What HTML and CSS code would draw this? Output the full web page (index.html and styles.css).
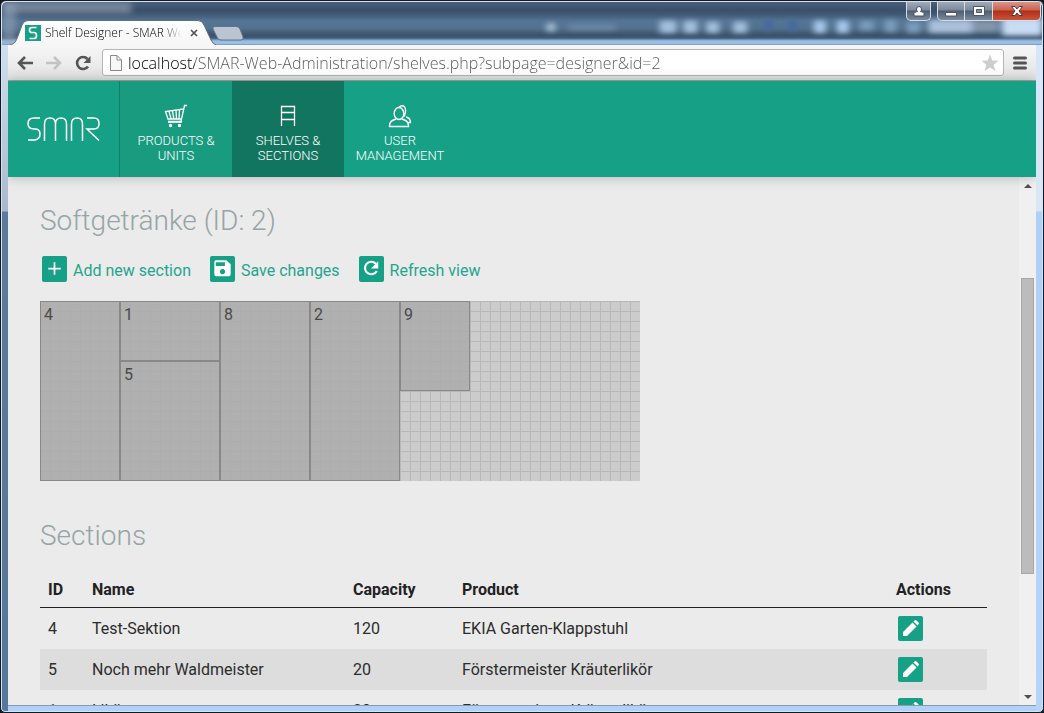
FILE: index.html
```html
<!DOCTYPE html>
<html lang="en">
<head>
<meta charset="utf-8">
<title>Shelf Designer - SMAR Web Administration</title>
<link rel="stylesheet" href="styles.css">
</head>
<body>
<div class="window">
  <div class="titlebar">
    <svg class="glass" preserveAspectRatio="none" viewBox="0 0 1044 46" aria-hidden="true">
      <defs><filter id="soft" x="-10%" y="-50%" width="120%" height="200%"><feGaussianBlur stdDeviation="3"/></filter></defs>
      <g filter="url(#soft)">
        <path fill="#9aa9b9" opacity=".55" d="M0 0h130v12H0z"/>
        <path fill="#8fa2b6" opacity=".6" d="M0 0h14v46H0z"/>
        <circle cx="551" cy="27" r="5" fill="#a9bdd2"/>
        <path fill="#7893ae" opacity=".7" d="M568 24h48v6h-48z"/>
        <path fill="#a3bfdd" d="M660 20h17v13h-17zM684 20h14v13h-14zM707 21h13v12h-13zM734 21h14v12h-14z"/>
        <path fill="#45699c" d="M765 19h9v12h-9zM789 19h9v12h-9z"/>
        <path fill="#a9c9ec" d="M815 20h12v13h-12zM838 20h12v13h-12z"/>
        <path fill="#7c9dbd" d="M861 20h14v10h-14zM886 19h12v13h-12zM908 21h14v12h-14z"/>
        <path fill="#abc0da" d="M930 19h44v14h-44z"/>
        <path fill="#8496aa" d="M974 20h26v12h-26z"/>
        <path fill="#c8dcf4" d="M1004 17h40v19h-40z"/>
      </g>
    </svg>
    <div class="tab">
      <svg class="tab-shape" viewBox="0 0 206 25" aria-hidden="true"><defs><linearGradient id="tabfill" x2="0" y2="1"><stop stop-color="#fff"/><stop offset="1" stop-color="#f6f6f6"/></linearGradient></defs><path d="M0 25C5 24 6 21 8 16L12 5Q14 .5 18 .5H188Q192 .5 194 5L201 20Q203 24 206 25" fill="url(#tabfill)" stroke="#5d6f83"/></svg>
      <svg class="favicon" viewBox="0 0 16 16" aria-hidden="true"><path fill="#16a085" d="M0 0h16v16H0z"/><path d="M11.500 2.500H7Q4.500 2.500 4.500 5T7 7.500H9Q11.500 7.500 11.500 10.500T9 13.500H4.500" fill="none" stroke="#fff" stroke-width="1.700"/></svg>
      <span class="tab-title">Shelf Designer - SMAR We</span>
      <button class="tab-close" aria-label="Close tab"><svg viewBox="0 0 8 8"><path d="M1 1l6 6M7 1L1 7" stroke="#555" stroke-width="1.700"/></svg></button>
    </div>
    <button class="new-tab" aria-label="New tab"><svg viewBox="0 0 32 15"><path d="M3 .5H24Q27 .5 28 3L31 11Q32 14 29 14H9Q6 14 5 11L1 3Q0 .5 3 .5Z" fill="#bac5d1" stroke="#60758d"/></svg></button>
    <div class="controls">
      <button class="ctl user" aria-label="User"><svg viewBox="0 0 12 12"><path d="M1 11V8.500Q1 7 4.500 6.500Q3.500 5.500 3.500 4Q3.500 1.500 6 1.500T8.500 4Q8.500 5.500 7.500 6.500Q11 7 11 8.500V11Z" fill="#fff" stroke="#424e60"/></svg></button>
      <div class="ctl-group">
        <button class="ctl min" aria-label="Minimize"><svg viewBox="0 0 12 12"><path d="M.5 7.500h11v3.500H.5z" fill="#fff" stroke="#4c576a"/></svg></button>
        <button class="ctl max" aria-label="Maximize"><svg viewBox="0 0 12 12"><path d="M.5 1.500h11v9H.5z" fill="#fff" stroke="#4c576a"/><path d="M3.500 4.500h5v3h-5z" fill="#8592a3" stroke="#4c576a"/></svg></button>
        <button class="ctl close" aria-label="Close"><svg viewBox="0 0 12 12"><path d="M.5 1.500H4L6 4l2-2.500h3.500L8 6l3.500 4.500H8L6 8l-2 2.500H.5L4 6Z" fill="#fff" stroke="#5b3a42"/></svg></button>
      </div>
    </div>
  </div>

  <div class="client">
    <div class="toolbar">
      <button class="tool" aria-label="Back"><svg viewBox="0 0 16 16"><path d="M16 8H2M8 2L2 8l6 6" fill="none" stroke="#555" stroke-width="2.600"/></svg></button>
      <button class="tool" aria-label="Forward"><svg viewBox="0 0 16 16"><path d="M0 8h14M8 2l6 6-6 6" fill="none" stroke="#c3c3c3" stroke-width="2.600"/></svg></button>
      <button class="tool" aria-label="Reload"><svg viewBox="0 0 16 16"><path d="M13 11.500A6 6 0 1 1 12.500 4" fill="none" stroke="#555" stroke-width="2.600"/><path d="M15.500 1v7H8.500Z" fill="#555"/></svg></button>
      <div class="address">
        <svg class="page" viewBox="0 0 12 16" aria-hidden="true"><path d="M.5 .5H7L11.500 5V15.500H.5ZM7 .5V5h4.500" fill="#f8f8f8" stroke="#888"/></svg>
        <input class="url" type="text" aria-label="Address" value="localhost/SMAR-Web-Administration/shelves.php?subpage=designer&amp;id=2">
        <button class="star" aria-label="Bookmark"><svg viewBox="0 0 18 18"><path d="M9 .5l2.300 6 6.200.3-4.800 4 1.600 6.200L9 13.500 3.700 17l1.600-6.200-4.800-4 6.200-.3Z" fill="#cecece"/></svg></button>
      </div>
      <button class="menu" aria-label="Menu"><svg viewBox="0 0 14 14"><path d="M1.500 2h11M1.500 7h11M1.500 12h11" stroke="#555" stroke-width="3" stroke-linecap="round"/></svg></button>
    </div>

    <header class="header">
      <a class="logo" href="#" aria-label="SMAR"><svg viewBox="0 0 73 24"><path d="M13 1H7Q1 1 1 6.500T7 12H8Q13 12 13 17T8 23H1M17.500 24V7Q17.500 1 23 1T28.500 7V24M28.500 7Q28.500 1 34 1T39.500 7V24M44.500 24V7Q44.500 1 50 1T55.500 7V24M60 1H67Q72 1 72 6.500T67 12H60L72 23.500" fill="none" stroke="#fff" stroke-width="1.500"/></svg></a>
      <nav class="nav">
        <a class="nav-item products" href="#"><svg viewBox="0 0 24 24" fill="none" stroke="#fff" stroke-width="1.300"><path d="M23 1.500H20.500L17 17.500H4M19.500 5L1.500 7.500 4 15H17.500M5 7.500l2 7M8.500 7l1.300 8M12 6.500l.5 8.500M15.500 6L15 15"/><path d="M4 18H18"/><circle cx="6.500" cy="21.500" r="1" fill="#fff"/><circle cx="15.500" cy="21.500" r="1" fill="#fff"/></svg><span>Products &amp; Units</span></a>
        <a class="nav-item active" href="#"><svg viewBox="0 0 24 24" fill="none" stroke="#fff" stroke-width="1.300"><path d="M5.500 22V2.500H18.500V22M5.500 8.500H18.500M5.500 15.500H18.500"/></svg><span>Shelves &amp; Sections</span></a>
        <a class="nav-item" href="#"><svg viewBox="0 0 24 24" fill="none" stroke="#fff" stroke-width="1.400"><ellipse cx="11" cy="9.500" rx="4.800" ry="6"/><path d="M8 15L4.500 16.500Q1.500 18 1.500 22.500H20.500Q20.500 18 17.500 16.500L14 15M11 3Q13 1 15.500 2Q18 3.500 17.500 8Q17 11 16 12.500M18 13Q22.500 14 22.500 18.500H20.500"/></svg><span>User Management</span></a>
      </nav>
    </header>

    <div class="viewport">
      <main class="content">
        <h1 class="heading">Softgetränke (ID: 2)</h1>
        <div class="actions">
          <button class="action"><span class="badge"><svg viewBox="0 0 26 26"><path d="M13 6v13M6.500 12.500h13" stroke="#fff" stroke-width="1.800"/></svg></span><span class="label">Add new section</span></button>
          <button class="action"><span class="badge"><svg viewBox="0 0 26 26"><path fill="#fff" fill-rule="evenodd" d="M6 4H17L21.500 8V18.500Q21.500 20.500 19.500 20.500H6.500Q4.500 20.500 4.500 18.500V6Q4.500 4 6 4ZM6 6V10H15.500V6ZM13 13a2.700 2.700 0 1 0 .01 0Z"/></svg></span><span class="label">Save changes</span></button>
          <button class="action"><span class="badge"><svg viewBox="0 0 26 26"><path d="M18.500 15A6.500 6.500 0 1 1 17.500 7.500" fill="none" stroke="#fff" stroke-width="2.200"/><path d="M20 5v7.500h-7.500Z" fill="#fff"/></svg></span><span class="label">Refresh view</span></button>
        </div>

        <div class="shelf">
          <div class="section full">4</div>
          <div class="section upper">1</div>
          <div class="section full">8</div>
          <div class="section full">2</div>
          <div class="section half">9</div>
          <div class="section lower">5</div>
        </div>

        <h2 class="heading">Sections</h2>
        <table class="table">
          <thead><tr><th class="c-id">ID</th><th class="c-name">Name</th><th class="c-cap">Capacity</th><th class="c-prod">Product</th><th class="c-act">Actions</th></tr></thead>
          <tbody>
            <tr><td>4</td><td>Test-Sektion</td><td>120</td><td>EKIA Garten-Klappstuhl</td><td><button class="edit" aria-label="Edit"><svg viewBox="0 0 25 25"><path fill="#fff" d="M5 20v-4L14.500 6.500l4 4L9 20ZM15.500 5.500l1-1q1-1 2 0l2 2q1 1 0 2l-1 1Z"/></svg></button></td></tr>
            <tr><td>5</td><td>Noch mehr Waldmeister</td><td>20</td><td>Förstermeister Kräuterlikör</td><td><button class="edit" aria-label="Edit"><svg viewBox="0 0 25 25"><path fill="#fff" d="M5 20v-4L14.500 6.500l4 4L9 20ZM15.500 5.500l1-1q1-1 2 0l2 2q1 1 0 2l-1 1Z"/></svg></button></td></tr>
            <tr><td>1</td><td>Likör</td><td>20</td><td>Förstermeister Kräuterlikör</td><td><button class="edit" aria-label="Edit"><svg viewBox="0 0 25 25"><path fill="#fff" d="M5 20v-4L14.500 6.500l4 4L9 20ZM15.500 5.500l1-1q1-1 2 0l2 2q1 1 0 2l-1 1Z"/></svg></button></td></tr>
          </tbody>
        </table>
      </main>
      <div class="scrollbar">
        <button class="scroll-btn" aria-label="Scroll up"><svg viewBox="0 0 8 4"><path d="M0 4L4 0l4 4Z" fill="#505050"/></svg></button>
        <div class="track"><div class="thumb"></div></div>
        <button class="scroll-btn" aria-label="Scroll down"><svg viewBox="0 0 8 4"><path d="M0 0h8L4 4Z" fill="#505050"/></svg></button>
      </div>
    </div>
  </div>
</div>
</body>
</html>
```

FILE: styles.css
```css
* { box-sizing: border-box; }

body {
  margin: 0;
  background: #10141c;
  font-family: Roboto, "Liberation Sans", sans-serif;
}

button {
  padding: 0;
  border: 0;
  background: none;
  font: inherit;
  color: inherit;
}

svg { display: block; }

/* Window frame */
.window {
  position: relative;
  display: flex;
  flex-direction: column;
  height: 100vh;
  padding: 0 7px 6px;
  overflow: hidden;
  border: 1px solid #141821;
  border-radius: 6px 6px 5px 5px;
  box-shadow: inset 0 0 0 1px #d3e4f7;
  background:
    linear-gradient(#dbe7f5, #a9b9cc 210px, #5c7a9c 211px, #56769b) left / 7px 100% no-repeat,
    linear-gradient(#d5e6fa, #d9e6f6 210px, #aed0f5 211px, #b4d5fa) right / 7px 100% no-repeat,
    #b1d2f8;
}

.titlebar {
  position: relative;
  display: flex;
  flex: none;
  height: 43px;
  margin: 1px -6px 0;
  padding: 0 1px 0 8px;
  border-radius: 5px 5px 0 0;
  overflow: hidden;
  background: linear-gradient(#48607a, #3b4f69 8px, #405873 12px, #557596 19px, #54728f 26px, #3c526a 33px, #425a75 36px, #9abfe6 39px, #9abfe6 42px, #6c8097 43px);
}

.glass {
  position: absolute;
  inset: 0;
  width: 100%;
  height: 100%;
}

.tab {
  position: relative;
  display: flex;
  align-items: center;
  align-self: flex-end;
  width: 206px;
  height: 25px;
  padding: 0 18px 0 15px;
}

.tab-shape {
  position: absolute;
  inset: 0;
}

.favicon {
  position: relative;
  width: 16px;
  height: 16px;
}

.tab-title {
  position: relative;
  flex: 1;
  margin: 0 8px 0 4px;
  overflow: hidden;
  white-space: nowrap;
  font: 300 12px/16px "Open Sans", "Noto Sans", sans-serif;
  color: #000;
  -webkit-mask-image: linear-gradient(to left, transparent, #000 20px);
  mask-image: linear-gradient(to left, transparent, #000 20px);
}

.tab-close {
  position: relative;
  width: 8px;
}

.new-tab {
  position: relative;
  align-self: flex-end;
  width: 32px;
  height: 15px;
  margin: 0 0 4px -4px;
}

.controls {
  position: relative;
  display: flex;
  gap: 6px;
  height: 20px;
  margin: -1px 0 0 auto;
}

.ctl-group { display: flex; }

.ctl {
  display: flex;
  align-items: center;
  justify-content: center;
  width: 28px;
  height: 20px;
  border: solid #d5dce4;
  border-width: 0 1px 1px 0;
  background: linear-gradient(#a4afbd, #7c899b 9px, #4d5d73 10px, #7b8b9d);
}

.ctl svg { width: 12px; height: 12px; }
.ctl.user { width: 25px; border-left-width: 1px; border-radius: 0 0 5px 5px; }
.ctl.min { border-left-width: 1px; border-radius: 0 0 0 5px; }
.ctl.close {
  width: 48px;
  border-radius: 0 0 5px;
  background: linear-gradient(#dd9a8e, #c96350 9px, #b02f17 10px, #c9553a);
}

.client {
  display: flex;
  flex: 1;
  flex-direction: column;
  min-height: 0;
  overflow: hidden;
  border-bottom: 1px solid #8b9aab;
  background: #ebebeb;
}

/* Browser toolbar */
.toolbar {
  display: flex;
  flex: none;
  align-items: center;
  height: 36px;
  padding: 0 9px;
  border-bottom: 1px solid #a5a5a5;
  background: linear-gradient(#f7f7f7, #e2e2e2);
}

.tool {
  width: 16px;
  margin-right: 13px;
}

.address {
  display: flex;
  flex: 1;
  align-items: center;
  height: 27px;
  margin: 0 9px 0 -2px;
  padding: 0 4px 0 7px;
  border: 1px solid #b5b5b5;
  border-radius: 3px;
  background: #fff;
}

.page { width: 12px; height: 16px; }

.url {
  flex: 1;
  min-width: 0;
  margin: 0 6px;
  padding: 0;
  border: 0;
  outline: 0;
  font: 300 16px/24px "Open Sans", "Noto Sans", sans-serif;
  color: transparent;
  background: linear-gradient(to right, #000 67px, #555 67px);
  -webkit-background-clip: text;
  background-clip: text;
}

.star { width: 18px; }
.menu { width: 14px; }

/* Application header */
.header {
  position: relative;
  z-index: 1;
  display: flex;
  flex: none;
  height: 96px;
  background: #16a085;
  box-shadow: 0 0 12px rgba(0, 0, 0, .25);
}

.logo {
  display: flex;
  align-items: center;
  justify-content: center;
  width: 112px;
  border-right: 1px solid #128068;
}

.logo svg { width: 73px; height: 24px; }
.nav { display: flex; }

.nav-item {
  display: flex;
  flex-direction: column;
  align-items: center;
  gap: 5px;
  width: 112px;
  padding: 23px 8px 0;
  text-align: center;
  text-decoration: none;
  text-transform: uppercase;
  font-size: 13px;
  font-weight: 300;
  line-height: 15px;
  color: #fff;
}

.nav-item svg { width: 24px; height: 24px; }
.nav-item.products { background: #189b7f; }
.nav-item.active { background: #12755f; }

/* Page */
.viewport {
  display: flex;
  flex: 1;
  min-height: 0;
}

.content {
  flex: 1;
  min-width: 0;
  padding: 25px 32px 0;
  overflow: hidden;
}

.heading {
  margin: 0;
  font-size: 28px;
  font-weight: 300;
  line-height: 38px;
  color: #95a5a6;
}

.actions {
  display: flex;
  gap: 19px;
  margin: 16px 2px 17px;
}

.action {
  display: flex;
  align-items: flex-start;
  gap: 6px;
  font-size: 16px;
  line-height: 26px;
  color: #24a58b;
}

.label { padding-top: 2px; }

.badge {
  width: 25px;
  height: 26px;
  border-radius: 2px;
  background: #16a085;
}

.badge svg { width: 25px; height: 26px; }

.shelf {
  display: grid;
  grid-template-columns: 80px 100px 90px 90px 70px;
  grid-template-rows: 60px 30px 90px;
  width: 600px;
  margin-bottom: 36px;
  background:
    linear-gradient(#b8b8b8 1px, transparent 1px) 0 0 / 10px 10px,
    linear-gradient(to right, #b8b8b8 1px, transparent 1px) 0 0 / 10px 10px,
    #ccc;
}

.section {
  padding: 3px;
  border: 1px solid #888;
  background: rgba(170, 170, 170, .85);
  font-size: 16px;
  line-height: 20px;
  color: #4a4a4a;
}

.full { grid-row: 1 / 4; }
.upper { grid-row: 1; }
.half { grid-row: 1 / 3; }
.lower { grid-area: 2 / 2 / 4; }

.table {
  width: 100%;
  margin-top: 16px;
  border-collapse: separate;
  border-spacing: 0;
  table-layout: fixed;
  font-size: 16px;
  line-height: 25px;
  color: #2c2c2c;
}

.table th,
.table td {
  padding: 8px;
  text-align: left;
  font-weight: 400;
}

.table th {
  padding: 6px 8px 5px;
  border-bottom: 1px solid #222;
  font-weight: 700;
  color: #222;
}

.table tbody tr:nth-child(even) { background: #ddd; }
.c-id { width: 44px; }
.c-name { width: 261px; }
.c-cap { width: 109px; }
.c-act { width: 99px; }

.edit {
  display: block;
  width: 25px;
  height: 25px;
  margin-left: 2px;
  border-radius: 2px;
  background: #16a085;
}

.scrollbar {
  display: flex;
  flex: none;
  flex-direction: column;
  width: 17px;
  background: #f0f0f0;
}

.scroll-btn {
  display: flex;
  flex: none;
  align-items: center;
  justify-content: center;
  height: 17px;
}

.scroll-btn svg { width: 8px; height: 4px; }

.track {
  flex: 1;
  padding: 0 2px;
}

.thumb {
  position: relative;
  top: 17%;
  height: 60%;
  border: 1px solid #a8a8a8;
  background: #bcbcbc;
}
```
